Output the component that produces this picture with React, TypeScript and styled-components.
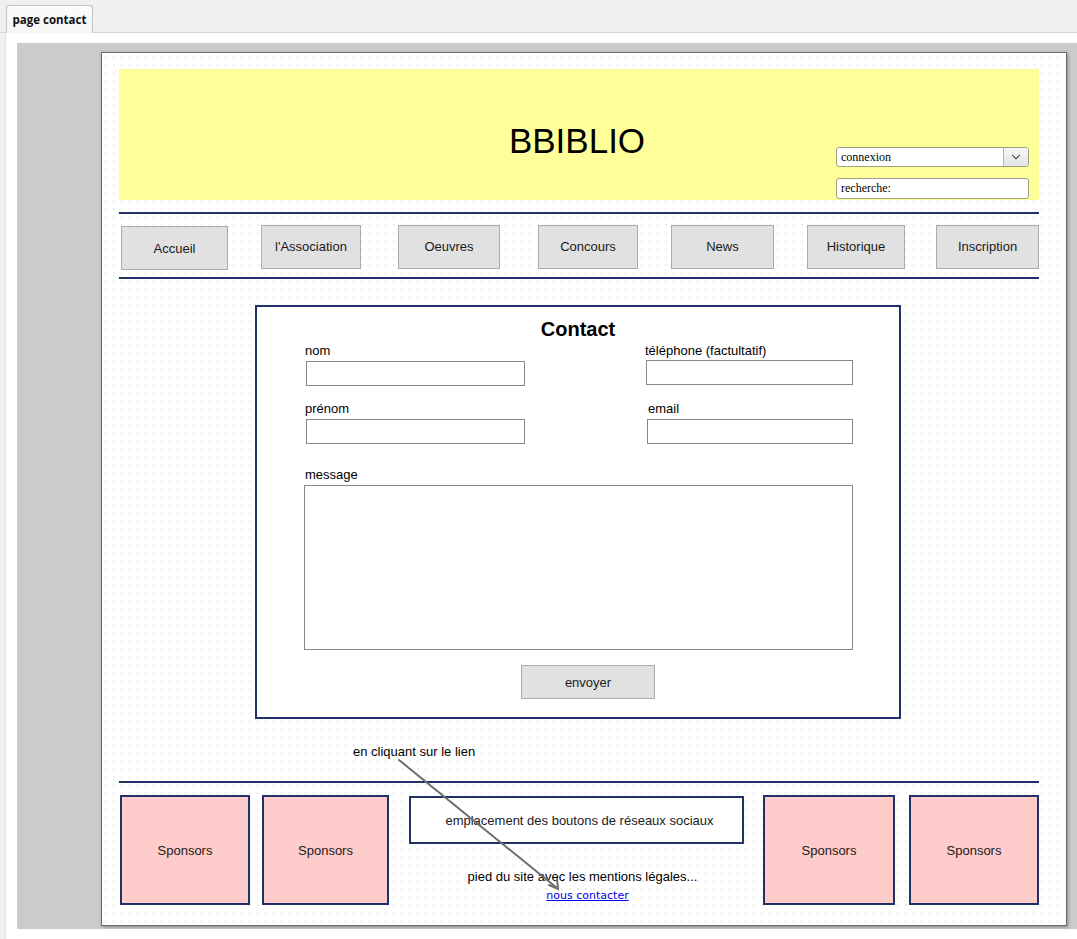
import React from 'react'
import styled, { createGlobalStyle } from 'styled-components'
import { ChevronDown } from 'lucide-react'

const GlobalStyle = createGlobalStyle`
    html, body {
        margin: 0;
        padding: 0;
        background: #f0f0f0;
        font-family: "Liberation Sans", Arial, sans-serif;
    }
`

const navy = '#22306a'

const SWindow = styled.div`
    width: 1077px;
    height: 939px;
    display: flex;
    flex-direction: column;
    overflow: hidden;
`
const STabBar = styled.div`
    height: 33px;
    display: flex;
    align-items: flex-end;
    padding-left: 6px;
    border-bottom: 1px solid #d6d6d6;
    box-sizing: border-box;
`
const STab = styled.div`
    height: 28px;
    width: 87px;
    box-sizing: border-box;
    display: flex;
    align-items: center;
    justify-content: center;
    background: linear-gradient(#fbfbfb, #f6f6f6);
    border: 1px solid #c4c4c4;
    border-bottom: none;
    border-radius: 3px 3px 0 0;
    font-family: "Open Sans", "Noto Sans", sans-serif;
    font-weight: 700;
    font-size: 11.5px;
    color: #111;
    margin-bottom: -1px;
`
const SContent = styled.div`
    flex: 1;
    margin-left: 5px;
    background: #fff;
    border-left: 1px solid #e2e2e2;
    padding: 10px 0 9px 11px;
`
const SStage = styled.div`
    background: #cbcbcb;
    padding: 9px 0 3px 84px;
`
const SCanvas = styled.div`
    position: relative;
    width: 966px;
    height: 874px;
    box-sizing: border-box;
    border: 1px solid #6a6a6a;
    box-shadow: 1px 1px 3px rgba(0, 0, 0, 0.35);
    background-color: #fff;
    background-image: radial-gradient(circle, #ededed 0.7px, transparent 1.1px);
    background-size: 8px 8px;
    padding: 16px 27px 0 17px;
    display: flex;
    flex-direction: column;
`
const SHeader = styled.header`
    height: 131px;
    background: #ffff99;
    display: grid;
    grid-template-columns: 1fr auto 1fr;
    align-items: center;
`
const STitle = styled.h1`
    margin: 0;
    grid-column: 2;
    font-weight: 400;
    font-size: 35px;
    color: #000;
    padding-top: 12px;
    margin-left: -4px;
`
const SControls = styled.div`
    grid-column: 3;
    align-self: end;
    justify-self: end;
    display: flex;
    flex-direction: column;
    gap: 11px;
    margin: 0 10px 1px 0;
`
const SField = styled.div<{ $h: number }>`
    width: 193px;
    height: ${p => p.$h}px;
    box-sizing: border-box;
    border: 1px solid #9e9e86;
    border-radius: 3px;
    background: #fff;
    display: flex;
    align-items: center;
    font-family: "Liberation Serif", "Times New Roman", serif;
    font-size: 12px;
    color: #000;
    overflow: hidden;
`
const SFieldText = styled.span`
    flex: 1;
    padding-left: 4px;
`
const SDropBtn = styled.span`
    width: 24px;
    height: 100%;
    display: flex;
    align-items: center;
    justify-content: center;
    border-left: 1px solid #b4b4b4;
    background: linear-gradient(#f7f7f7, #e4e4e4);
    color: #222;
`
const SRule = styled.div<{ $top: number }>`
    height: 2px;
    background: ${navy};
    margin-top: ${p => p.$top}px;
`
const SNav = styled.nav`
    display: flex;
    align-items: flex-start;
    margin-top: 11px;
    padding-left: 2px;
`
const SNavBtn = styled.div<{ $w: number; $ml: number; $dy?: number }>`
    width: ${p => p.$w}px;
    height: 44px;
    box-sizing: border-box;
    margin-left: ${p => p.$ml}px;
    margin-top: ${p => p.$dy || 0}px;
    background: #e1e1e1;
    border: 1px solid #ababab;
    display: flex;
    align-items: center;
    justify-content: center;
    font-size: 13px;
    color: #1a1a1a;
    padding-bottom: ${p => (p.$dy ? 0 : 2)}px;
`
const SContactBox = styled.section`
    margin: 26px 0 0 136px;
    width: 646px;
    height: 414px;
    box-sizing: border-box;
    border: 2px solid ${navy};
    background: #fff;
    padding: 10px 0 0 49px;
`
const SContactTitle = styled.h2`
    margin: 0 0 2px -49px;
    text-align: center;
    font-size: 20px;
    line-height: 24px;
    font-weight: 700;
    color: #000;
`
const SGrid = styled.div`
    display: grid;
    grid-template-columns: 340px 207px;
    row-gap: 15px;
`
const SGroup = styled.div`
    display: flex;
    flex-direction: column;
`
const SLabel = styled.label<{ $indent?: number }>`
    font-size: 13px;
    line-height: 15px;
    color: #000;
    margin: 0 0 3px ${p => (p.$indent || 0) - 1}px;
`
const SInput = styled.div<{ $w: number; $shift?: number }>`
    width: ${p => p.$w}px;
    height: 25px;
    box-sizing: border-box;
    border: 1px solid #888;
    background: #fff;
    margin-left: ${p => p.$shift || 0}px;
`
const SMessage = styled.div`
    margin-top: 23px;
    display: flex;
    flex-direction: column;
`
const STextArea = styled.div`
    width: 549px;
    height: 165px;
    box-sizing: border-box;
    margin-left: -2px;
    border: 1px solid #888;
    background: #fff;
`
const SSend = styled.div`
    margin: 15px 0 0 215px;
    width: 134px;
    height: 34px;
    box-sizing: border-box;
    background: #e1e1e1;
    border: 1px solid #ababab;
    display: flex;
    align-items: center;
    justify-content: center;
    font-size: 13px;
    color: #1a1a1a;
`
const SNote = styled.div`
    margin: 25px 0 0 234px;
    font-size: 13px;
    line-height: 15px;
    color: #000;
`
const SFooter = styled.footer`
    display: flex;
    align-items: flex-start;
    margin-top: 12px;
    padding-left: 1px;
`
const SSponsor = styled.div<{ $w: number; $ml: number }>`
    width: ${p => p.$w}px;
    height: 110px;
    margin-left: ${p => p.$ml}px;
    box-sizing: border-box;
    background: #ffcccc;
    border: 2px solid ${navy};
    display: flex;
    align-items: center;
    justify-content: center;
    font-size: 13px;
    color: #1a1a1a;
`
const SMiddle = styled.div`
    width: 335px;
    margin-left: 20px;
    display: flex;
    flex-direction: column;
    align-items: center;
`
const SSocial = styled.div`
    width: 100%;
    height: 48px;
    margin-top: 1px;
    box-sizing: border-box;
    border: 2px solid ${navy};
    background: #fff;
    display: flex;
    align-items: center;
    justify-content: center;
    font-size: 13px;
    color: #1a1a1a;
    padding-left: 6px;
`
const SLegal = styled.div`
    margin-top: 25px;
    padding-left: 12px;
    font-size: 13px;
    line-height: 15px;
    color: #000;
`
const SLink = styled.a`
    margin-top: 5px;
    padding-left: 22px;
    font-family: "Comic Sans MS", "DejaVu Sans", sans-serif;
    font-size: 11px;
    line-height: 13px;
    color: #0000ee;
    text-decoration: underline;
`
const SArrow = styled.svg`
    position: absolute;
    left: 0;
    top: 0;
    pointer-events: none;
`

const navItems: { label: string; w: number; ml: number; dy?: number }[] = [
    { label: 'Accueil', w: 107, ml: 0, dy: 1 },
    { label: "l'Association", w: 100, ml: 33 },
    { label: 'Oeuvres', w: 102, ml: 37 },
    { label: 'Concours', w: 100, ml: 38 },
    { label: 'News', w: 103, ml: 33 },
    { label: 'Historique', w: 98, ml: 33 },
    { label: 'Inscription', w: 103, ml: 31 },
]

export default function App() {
    return (
        <>
            <GlobalStyle />
            <SWindow>
                <STabBar>
                    <STab>page contact</STab>
                </STabBar>
                <SContent>
                    <SStage>
                        <SCanvas>
                            <SHeader>
                                <STitle>BBIBLIO</STitle>
                                <SControls>
                                    <SField $h={20}>
                                        <SFieldText>connexion</SFieldText>
                                        <SDropBtn>
                                            <ChevronDown size={14} strokeWidth={1.8} />
                                        </SDropBtn>
                                    </SField>
                                    <SField $h={21}>
                                        <SFieldText>recherche:</SFieldText>
                                    </SField>
                                </SControls>
                            </SHeader>
                            <SRule $top={12} />
                            <SNav>
                                {navItems.map(item => (
                                    <SNavBtn key={item.label} $w={item.w} $ml={item.ml} $dy={item.dy}>
                                        {item.label}
                                    </SNavBtn>
                                ))}
                            </SNav>
                            <SRule $top={7} />
                            <SContactBox>
                                <SContactTitle>Contact</SContactTitle>
                                <SGrid>
                                    <SGroup>
                                        <SLabel>nom</SLabel>
                                        <SInput $w={219} />
                                    </SGroup>
                                    <SGroup>
                                        <SLabel>téléphone (factultatif)</SLabel>
                                        <SInput $w={207} style={{ marginTop: -1 }} />
                                    </SGroup>
                                    <SGroup>
                                        <SLabel>prénom</SLabel>
                                        <SInput $w={219} />
                                    </SGroup>
                                    <SGroup>
                                        <SLabel $indent={3}>email</SLabel>
                                        <SInput $w={206} $shift={1} />
                                    </SGroup>
                                </SGrid>
                                <SMessage>
                                    <SLabel>message</SLabel>
                                    <STextArea />
                                </SMessage>
                                <SSend>envoyer</SSend>
                            </SContactBox>
                            <SNote>en cliquant sur le lien</SNote>
                            <SRule $top={22} />
                            <SFooter>
                                <SSponsor $w={130} $ml={0}>Sponsors</SSponsor>
                                <SSponsor $w={127} $ml={12}>Sponsors</SSponsor>
                                <SMiddle>
                                    <SSocial>emplacement des boutons de réseaux sociaux</SSocial>
                                    <SLegal>pied du site avec les mentions légales...</SLegal>
                                    <SLink href="#">nous contacter</SLink>
                                </SMiddle>
                                <SSponsor $w={132} $ml={19}>Sponsors</SSponsor>
                                <SSponsor $w={130} $ml={14}>Sponsors</SSponsor>
                            </SFooter>
                            <SArrow width="966" height="874" viewBox="0 0 966 874">
                                <g stroke="#6e6e6e" strokeWidth="2" fill="none" strokeLinecap="round">
                                    <line x1="297" y1="707" x2="455" y2="835" />
                                    <polyline points="447,832 456,836 455,826" />
                                </g>
                            </SArrow>
                        </SCanvas>
                    </SStage>
                </SContent>
            </SWindow>
        </>
    )
}
